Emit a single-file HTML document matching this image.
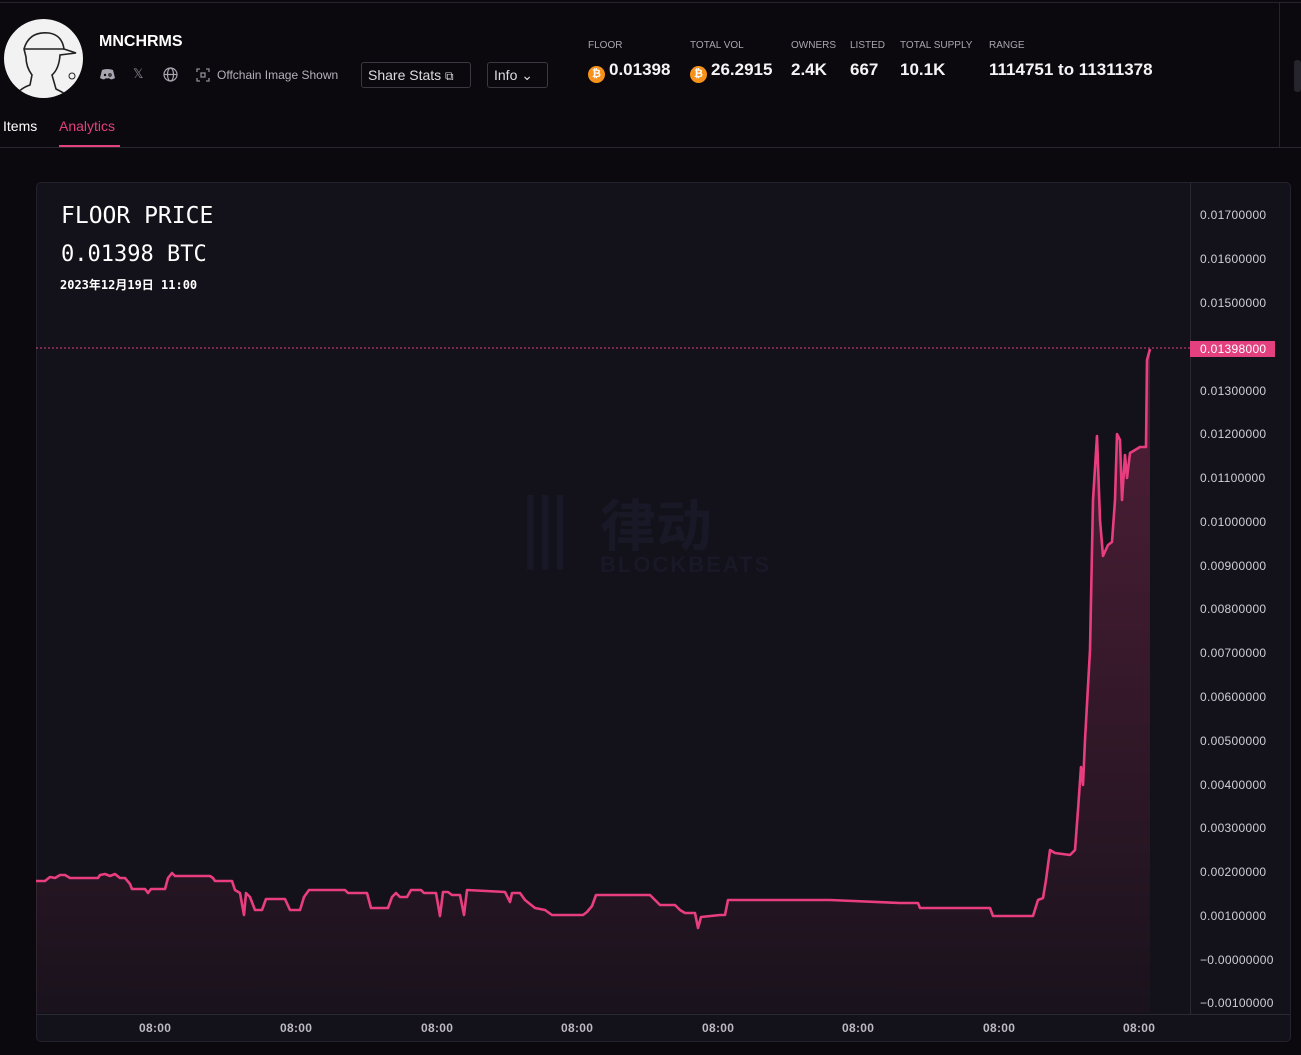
<!DOCTYPE html>
<html><head><meta charset="utf-8"><style>
*{margin:0;padding:0;box-sizing:border-box}
body{width:1301px;height:1055px;background:#0b090d;font-family:"Liberation Sans",sans-serif;color:#fff;position:relative;overflow:hidden}
.abs{position:absolute}
.lbl{font-size:10px;color:#a9a6b0;top:40px}
.val{font-size:17px;font-weight:bold;top:60px;color:#f4f4f6}
.btc{display:inline-block;width:17px;height:17px;border-radius:50%;background:#f7931a;color:#fff;font-size:11px;text-align:center;line-height:17px;vertical-align:-2px;margin-right:4px}
.btn{border:1px solid #3a3840;border-radius:3px;height:26px;top:62px;font-size:14px;color:#dcdce0;padding:0 6px;line-height:24px}
.ax{font-size:12px;color:#cfcfd6;left:1200px;letter-spacing:0.3px}
.xl{font-size:12px;font-weight:bold;color:#bdbac4;top:1021px;letter-spacing:0.3px}
.mono{font-family:"DejaVu Sans Mono","Liberation Mono","Noto Sans CJK SC",monospace}
</style></head><body>
<div class="abs" style="left:0;top:2px;width:1301px;height:1px;background:#26242c"></div>
<div class="abs" style="left:1279px;top:3px;width:1px;height:145px;background:#26242c"></div>
<div class="abs" style="left:1294px;top:60px;width:7px;height:32px;background:#26242c;border-radius:3px"></div>
<div class="abs" style="left:4px;top:19px;width:79px;height:79px;border-radius:50%;background:#f2f2f2;overflow:hidden">
<svg width="79" height="79" viewBox="0 0 79 79"><path d="M20 30 Q25 12 45 14 Q58 16 60 30 L72 34 L56 36 Q55 50 48 56 L52 70 Q60 74 70 80 L10 80 Q14 70 26 66 L28 56 Q22 48 22 38 Z" fill="none" stroke="#222" stroke-width="1.6"/><path d="M20 30 L60 30" stroke="#222" stroke-width="1.5"/><circle cx="68" cy="57" r="3" fill="none" stroke="#222"/></svg></div>
<div class="abs" style="left:99px;top:33px;font-size:16px;font-weight:bold">MNCHRMS</div>
<svg class="abs" style="left:100px;top:68px" width="15" height="12" viewBox="0 0 15 12"><path d="M2 2 Q7 0 13 2 L15 10 Q12 12 10 11 L9 10 Q7 11 6 10 L5 11 Q3 12 0 10 Z" fill="#a8a5b0"/><circle cx="5" cy="7" r="1.2" fill="#0b090d"/><circle cx="10" cy="7" r="1.2" fill="#a8a5b0" stroke="#0b090d"/></svg>
<div class="abs" style="left:133px;top:66px;font-size:13px;color:#8e8b96">𝕏</div>
<svg class="abs" style="left:163px;top:67px" width="15" height="15" viewBox="0 0 15 15" fill="none" stroke="#a8a5b0" stroke-width="1.2"><circle cx="7.5" cy="7.5" r="6.5"/><ellipse cx="7.5" cy="7.5" rx="3" ry="6.5"/><path d="M1 7.5H14"/></svg>
<svg class="abs" style="left:196px;top:68px" width="14" height="14" viewBox="0 0 14 14" fill="none" stroke="#8e8b96" stroke-width="1.3"><path d="M1 4V1H4M10 1H13V4M13 10V13H10M4 13H1V10"/><rect x="5" y="5" width="4" height="4"/></svg>
<div class="abs" style="left:217px;top:68px;font-size:12px;color:#b4b1bb">Offchain Image Shown</div>
<div class="abs btn" style="left:361px;width:110px">Share Stats <span style="font-size:12px">⧉</span></div>
<div class="abs btn" style="left:487px;width:61px">Info ⌄</div>
<div class="abs" style="left:3px;top:118px;font-size:14px">Items</div>
<div class="abs" style="left:59px;top:118px;font-size:14px;color:#e2407f">Analytics</div>
<div class="abs" style="left:59px;top:145px;width:61px;height:2px;background:#e2407f"></div>
<div class="abs" style="left:0;top:147px;width:1301px;height:1px;background:#2a2830"></div>

<div class="abs lbl" style="left:588px">FLOOR</div>
<div class="abs lbl" style="left:690px">TOTAL VOL</div>
<div class="abs lbl" style="left:791px">OWNERS</div>
<div class="abs lbl" style="left:850px">LISTED</div>
<div class="abs lbl" style="left:900px">TOTAL SUPPLY</div>
<div class="abs lbl" style="left:989px">RANGE</div>
<div class="abs val" style="left:588px"><span class="btc">₿</span>0.01398</div>
<div class="abs val" style="left:690px"><span class="btc">₿</span>26.2915</div>
<div class="abs val" style="left:791px">2.4K</div>
<div class="abs val" style="left:850px">667</div>
<div class="abs val" style="left:900px">10.1K</div>
<div class="abs val" style="left:989px">1114751 to 11311378</div>

<div class="abs" style="left:36px;top:182px;width:1255px;height:860px;background:#131119;border:1px solid #24222a;border-radius:5px"></div>
<div class="abs" style="left:1190px;top:183px;width:1px;height:832px;background:#2a2830"></div>
<div class="abs" style="left:37px;top:1014px;width:1253px;height:1px;background:#2a2830"></div>
<div class="abs" style="left:600px;top:482px;font-size:56px;font-weight:bold;color:#181826;font-family:'Noto Sans CJK SC',sans-serif">律动</div>
<div class="abs" style="left:520px;top:480px;width:62px;height:92px;color:#181826;font-size:80px;line-height:92px;letter-spacing:-6px">|||</div>
<div class="abs" style="left:600px;top:552px;font-size:22px;font-weight:bold;color:#181826;letter-spacing:2px">BLOCKBEATS</div>

<svg class="abs" style="left:0;top:0" width="1301" height="1055">
<defs><linearGradient id="g" x1="0" y1="0" x2="0" y2="1"><stop offset="0" stop-color="#e2407f" stop-opacity="0.3"/><stop offset="1" stop-color="#e2407f" stop-opacity="0.03"/></linearGradient></defs>
<line x1="36" y1="348" x2="1190" y2="348" stroke="#e2407f" stroke-dasharray="2,2" stroke-width="1"/>
<polygon fill="url(#g)" points="36,1013 36,881 45,881 50,877 55,878 60,875 65,875 70,878 98,878 100,875 105,874 110,876 115,874 120,878 125,878 130,884 132,889 145,889 148,893 151,889 165,889 168,878 172,873 175,876 210,876 213,878 215,881 232,881 235,890 240,893 244,915 246,893 250,897 255,910 262,910 266,899 285,899 290,910 300,910 304,897 309,890 345,890 348,893 367,893 371,908 388,908 392,897 396,893 400,897 407,897 411,890 421,890 424,893 436,893 440,916 443,892 448,892 452,895 460,895 464,915 467,890 505,892 510,902 512,893 520,893 525,900 530,904 535,908 545,910 552,915 583,915 587,912 592,906 596,895 650,895 655,900 660,905 675,905 680,910 685,913 695,913 698,928 701,917 720,915 725,915 728,900 830,900 900,903 918,903 920,908 990,908 993,916 1033,916 1038,900 1043,898 1046,880 1050,850 1055,853 1070,855 1075,850 1078,810 1081,767 1083,785 1085,740 1090,650 1093,500 1097,436 1100,520 1103,556 1108,545 1112,542 1115,500 1117,434 1120,440 1122,500 1125,455 1127,478 1130,453 1135,450 1140,447 1146,447 1147,360 1150,349 1150,1013"/>
<polyline fill="none" stroke="#e83e80" stroke-width="2.6" stroke-linejoin="round" points="36,881 45,881 50,877 55,878 60,875 65,875 70,878 98,878 100,875 105,874 110,876 115,874 120,878 125,878 130,884 132,889 145,889 148,893 151,889 165,889 168,878 172,873 175,876 210,876 213,878 215,881 232,881 235,890 240,893 244,915 246,893 250,897 255,910 262,910 266,899 285,899 290,910 300,910 304,897 309,890 345,890 348,893 367,893 371,908 388,908 392,897 396,893 400,897 407,897 411,890 421,890 424,893 436,893 440,916 443,892 448,892 452,895 460,895 464,915 467,890 505,892 510,902 512,893 520,893 525,900 530,904 535,908 545,910 552,915 583,915 587,912 592,906 596,895 650,895 655,900 660,905 675,905 680,910 685,913 695,913 698,928 701,917 720,915 725,915 728,900 830,900 900,903 918,903 920,908 990,908 993,916 1033,916 1038,900 1043,898 1046,880 1050,850 1055,853 1070,855 1075,850 1078,810 1081,767 1083,785 1085,740 1090,650 1093,500 1097,436 1100,520 1103,556 1108,545 1112,542 1115,500 1117,434 1120,440 1122,500 1125,455 1127,478 1130,453 1135,450 1140,447 1146,447 1147,360 1150,349"/>
</svg>
<div class="abs" style="left:1190px;top:341px;width:85px;height:16px;background:#e2407f;color:#fff;font-size:12px;line-height:16px;padding-left:10px;letter-spacing:0.3px">0.01398000</div>
<div class="abs ax" style="top:208px">0.01700000</div>
<div class="abs ax" style="top:252px">0.01600000</div>
<div class="abs ax" style="top:296px">0.01500000</div>
<div class="abs ax" style="top:384px">0.01300000</div>
<div class="abs ax" style="top:427px">0.01200000</div>
<div class="abs ax" style="top:471px">0.01100000</div>
<div class="abs ax" style="top:515px">0.01000000</div>
<div class="abs ax" style="top:559px">0.00900000</div>
<div class="abs ax" style="top:602px">0.00800000</div>
<div class="abs ax" style="top:646px">0.00700000</div>
<div class="abs ax" style="top:690px">0.00600000</div>
<div class="abs ax" style="top:734px">0.00500000</div>
<div class="abs ax" style="top:778px">0.00400000</div>
<div class="abs ax" style="top:821px">0.00300000</div>
<div class="abs ax" style="top:865px">0.00200000</div>
<div class="abs ax" style="top:909px">0.00100000</div>
<div class="abs ax" style="top:953px">−0.00000000</div>
<div class="abs ax" style="top:996px">−0.00100000</div>
<div class="abs xl" style="left:139px">08:00</div>
<div class="abs xl" style="left:280px">08:00</div>
<div class="abs xl" style="left:421px">08:00</div>
<div class="abs xl" style="left:561px">08:00</div>
<div class="abs xl" style="left:702px">08:00</div>
<div class="abs xl" style="left:842px">08:00</div>
<div class="abs xl" style="left:983px">08:00</div>
<div class="abs xl" style="left:1123px">08:00</div>

<div class="abs mono" style="left:61px;top:203px;font-size:23px">FLOOR PRICE</div>
<div class="abs mono" style="left:61px;top:242px;font-size:22px">0.01398 BTC</div>
<div class="abs mono" style="left:60px;top:276px;font-size:12px;font-weight:bold">2023年12月19日 11:00</div>
</body></html>
